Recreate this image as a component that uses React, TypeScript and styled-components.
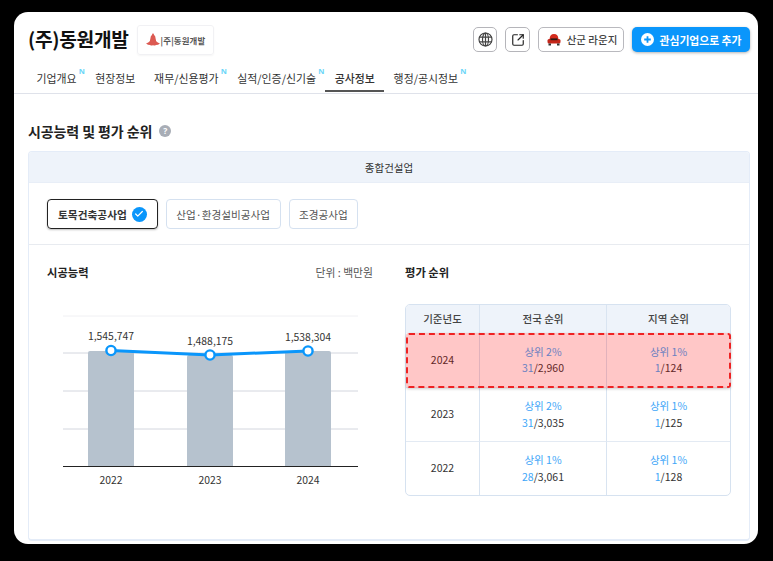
import React from 'react';
import styled, { createGlobalStyle } from 'styled-components';
import { SquareArrowOutUpRight, Check } from 'lucide-react';

const Global = createGlobalStyle`
  html, body { margin: 0; padding: 0; background: #000; }
  body { width: 773px; height: 561px; overflow: hidden; font-family: "Noto Sans CJK KR", "Noto Sans", sans-serif; color: #222; }
  * { box-sizing: border-box; }
`;
const Frame = styled.div`
  width: 773px; height: 561px; background: #000; padding: 12px 15px 17px 14px;
`;
const Screen = styled.div`
  width: 744px; height: 532px; background: #fff; border-radius: 14px; overflow: hidden;
  display: flex; flex-direction: column;
`;
const Header = styled.header`
  height: 82px; border-bottom: 1px solid #dfe2ea; padding: 13px 8px 0 13px; display: flex; flex-direction: column; flex: none;
`;
const TopRow = styled.div`
  display: flex; align-items: center; height: 29px; padding-left: 1px;
`;
const Title = styled.h1`
  margin: 0; font-size: 19.2px; line-height: 29px; font-weight: 700; color: #111; letter-spacing: -0.3px; width: 109px; white-space: nowrap;
`;
const LogoBox = styled.div`
  width: 77px; height: 30px; border: 1px solid #f1f1f4; border-radius: 3px; display: flex; align-items: center; justify-content: center; gap: 1px;
  box-shadow: 0 1px 2px rgba(0,0,0,.04);
`;
const LogoText = styled.span`
  font-size: 8.4px; font-weight: 700; color: #555; white-space: nowrap; letter-spacing: 0.2px;
`;
const Actions = styled.div`
  margin-left: auto; display: flex; gap: 8px; align-items: center;
`;
const IconButton = styled.button<{ $wide?: boolean }>`
  width: ${p => p.$wide ? 25 : 24}px; height: 25px; padding: 0; background: #fff; border: 1px solid #b5b5ba; border-radius: 5px; display: flex; align-items: center; justify-content: center; color: #444;
`;
const LoungeButton = styled.button`
  width: 86px; height: 25px; padding: 0 0 0 2px; background: #fff; border: 1px solid #b9b9be; border-radius: 5px; display: flex; align-items: center; justify-content: center; gap: 6px;
  font: 500 10.5px "Noto Sans CJK KR", sans-serif; color: #444;
`;
const AddButton = styled.button`
  width: 118px; height: 25px; padding: 0; background: #0a96fb; border: 0; border-radius: 5px; display: flex; align-items: center; justify-content: center; gap: 6px;
  font: 700 10.8px "Noto Sans CJK KR", sans-serif; color: #fff; box-shadow: 0 1px 3px rgba(0,0,0,.3);
`;
const Tabs = styled.nav`
  display: flex; margin-top: 9px; height: 30px;
`;
const Tab = styled.div<{ $active?: boolean }>`
  position: relative; padding: 7px 9.4px 0; height: 29px; font-size: 10.9px; line-height: 16px; color: #333; white-space: nowrap; font-weight: ${p => p.$active ? 500 : 400};
  border-bottom: ${p => p.$active ? '2px solid #555' : '2px solid transparent'};
`;
const NewMark = styled.span`
  position: absolute; top: 3px; right: 1px; font: 700 7.5px "Noto Sans", sans-serif; color: #6ad6f8;
`;
const Content = styled.main`
  padding: 27px 8px 0 14px; flex: 1; min-height: 0; display: flex; flex-direction: column;
`;
const SectionHead = styled.div`
  display: flex; align-items: center; gap: 7px; height: 20px; margin-bottom: 10px;
`;
const SectionTitle = styled.h2`
  margin: 0; font-size: 14px; font-weight: 700; color: #222; letter-spacing: -0.1px;
`;
const Help = styled.span`
  width: 12px; height: 12px; border-radius: 50%; background: #a8adb6; color: #fff; font: 700 8.5px/12px "Noto Sans", sans-serif; text-align: center;
`;
const Card = styled.section`
  height: 390px; border: 1px solid #e4ecf8; border-bottom-width: 2px; border-radius: 4px; display: flex; flex-direction: column; overflow: hidden;
`;
const CardHead = styled.div`
  height: 31px; flex: none; background: #eef3fa; font-size: 10.5px; line-height: 31px; text-align: center; color: #333; border-bottom: 1px solid #e8eef7;
`;
const Chips = styled.div`
  height: 62px; flex: none; padding: 16px 18px 0; display: flex; gap: 8px; border-bottom: 1px solid #e8ebf0;
`;
const Chip = styled.div<{ $active?: boolean }>`
  height: 30px; display: flex; align-items: center; gap: 5px; padding: 0 ${p => p.$active ? 10 : 9.5}px; border-radius: 4px; font-size: ${p => p.$active ? 10.7 : 10.6}px; white-space: nowrap;
  border: 1px solid ${p => p.$active ? '#222' : '#d5e1f0'};
  font-weight: ${p => p.$active ? 700 : 400};
  color: ${p => p.$active ? '#333' : '#555'};
  box-shadow: ${p => p.$active ? '0 1px 2px rgba(0,0,0,.25)' : 'none'};
`;
const CheckDot = styled.span`
  width: 15px; height: 15px; border-radius: 50%; background: #0a96fb; color: #fff; display: flex; align-items: center; justify-content: center;
`;
const Panels = styled.div`
  display: grid; grid-template-columns: 326px 326px; column-gap: 32px; padding: 17px 18px 0; flex: 1;
`;
const Panel = styled.div`
  display: flex; flex-direction: column; min-width: 0;
`;
const PanelHead = styled.div`
  display: flex; justify-content: space-between; align-items: center; height: 20px;
`;
const PanelTitle = styled.h3`
  margin: 0; font-size: 11.3px; font-weight: 700; color: #222;
`;
const Unit = styled.span`
  font-size: 10.8px; color: #555;
`;
const Chart = styled.svg`
  display: block; margin-top: 31px; width: 326px; height: 190px;
`;
const TableWrap = styled.div`
  position: relative; margin-top: 22px; width: 326px; border: 1px solid #d6e2f0; border-radius: 5px; overflow: visible;
`;
const Grid = styled.div`
  display: grid; grid-template-columns: 74px 127px 1fr;
`;
const HeadCell = styled.div`
  height: 28px; background: #eef3fa; font-size: 10.5px; line-height: 28px; text-align: center; color: #444; border-right: 1px solid #d9e4f1; font-weight: 500;
  &:first-child { border-top-left-radius: 4px; }
  &:nth-child(3) { border-right: 0; border-top-right-radius: 4px; }
`;
const Cell = styled.div<{ $last?: boolean; $h: number; $end?: boolean }>`
  height: ${p => p.$h}px; display: flex; flex-direction: column; align-items: center; justify-content: center; font-size: 10.5px; line-height: 16.5px; color: #333;
  border-right: ${p => p.$end ? 0 : '1px solid #d9e4f1'};
  border-bottom: ${p => p.$last ? 0 : '1px solid #e3eaf3'};
`;
const Top = styled.span`
  color: #3ea6f8;
`;
const Rank = styled.span`
  color: #3ea6f8;
`;
const Highlight = styled.div`
  position: absolute; left: 0; top: 28px; width: 325px; height: 55px; background: rgba(255, 0, 0, .22); border: 2px dashed #ee2222; border-radius: 3px;
  box-shadow: 0 1px 3px rgba(0,0,0,.2);
`;

const LogoMark = () => (
  <svg width="14" height="13" viewBox="0 0 14 13">
    <path d="M7 0 L8.5 2.5 Q9.5 3 9.5 5 Q9.8 8 11 9 Q13 10 14 10.5 Q12 12 10 12 Q8 13 7 12 Q6 13 4 12 Q2 12 0 10.5 Q1 10 3 9 Q4.2 8 4.5 5 Q4.5 3 5.5 2.5 Z" fill="#dc5a52" />
  </svg>
);
const GlobeIcon = () => (
  <svg width="15" height="15" viewBox="0 0 15 15" fill="none" stroke="#444" strokeWidth="1.2">
    <circle cx="7.5" cy="7.5" r="6.5" />
    <ellipse cx="7.5" cy="7.5" rx="3" ry="6.5" />
    <path d="M7.5 1 V14 M1.2 5.2 H13.8 M1.2 9.8 H13.8" />
  </svg>
);
const Sofa = () => (
  <svg width="14" height="12" viewBox="0 0 14 12">
    <path d="M2.6 5 Q2.8 0 7 0 Q11.2 0 11.4 5 Z" fill="#d42a1c" />
    <rect x="0.5" y="5" width="13" height="4.5" rx="1.5" fill="#c4261a" />
    <rect x="3.5" y="4.4" width="7" height="1.8" fill="#2a1a14" />
    <rect x="1.5" y="9.5" width="2.5" height="2" fill="#333" />
    <rect x="10" y="9.5" width="2.5" height="2" fill="#333" />
  </svg>
);
const PlusCircle = () => (
  <svg width="13" height="13" viewBox="0 0 13 13">
    <circle cx="6.5" cy="6.5" r="6.5" fill="#fff" />
    <path d="M6.5 3.2 V9.8 M3.2 6.5 H9.8" stroke="#0a96fb" strokeWidth="1.8" />
  </svg>
);

const bars = [
  { year: '2022', label: '1,545,747', x: 41, cx: 64, top: 38, py: 37.5, ly: 27 },
  { year: '2023', label: '1,488,175', x: 140, cx: 163, top: 42, py: 42, ly: 32 },
  { year: '2024', label: '1,538,304', x: 238, cx: 261, top: 38, py: 38, ly: 28 },
];

const rows = [
  { year: '2024', h: 55, a: ['상위 2%', '31', '/2,960'], b: ['상위 1%', '1', '/124'] },
  { year: '2023', h: 54, a: ['상위 2%', '31', '/3,035'], b: ['상위 1%', '1', '/125'] },
  { year: '2022', h: 53, a: ['상위 1%', '28', '/3,061'], b: ['상위 1%', '1', '/128'], last: true },
];

const tabs: [string, boolean][] = [
  ['기업개요', true], ['현장정보', false], ['재무/신용평가', true], ['실적/인증/신기술', true], ['공사정보', false], ['행정/공시정보', true],
];

export default function App() {
  return (
    <Frame>
      <Global />
      <Screen>
        <Header>
          <TopRow>
            <Title>(주)동원개발</Title>
            <LogoBox><LogoMark /><LogoText>|주|동원개발</LogoText></LogoBox>
            <Actions>
              <IconButton><GlobeIcon /></IconButton>
              <IconButton $wide><SquareArrowOutUpRight size={14} strokeWidth={2} color="#222" /></IconButton>
              <LoungeButton><Sofa />산군 라운지</LoungeButton>
              <AddButton><PlusCircle />관심기업으로 추가</AddButton>
            </Actions>
          </TopRow>
          <Tabs>
            {tabs.map(([t, n]) => (
              <Tab key={t} $active={t === '공사정보'}>{t}{n && <NewMark>N</NewMark>}</Tab>
            ))}
          </Tabs>
        </Header>
        <Content>
          <SectionHead><SectionTitle>시공능력 및 평가 순위</SectionTitle><Help>?</Help></SectionHead>
          <Card>
            <CardHead>종합건설업</CardHead>
            <Chips>
              <Chip $active>토목건축공사업<CheckDot><Check size={10} strokeWidth={3} /></CheckDot></Chip>
              <Chip>산업·환경설비공사업</Chip>
              <Chip>조경공사업</Chip>
            </Chips>
            <Panels>
              <Panel>
                <PanelHead><PanelTitle>시공능력</PanelTitle><Unit>단위 : 백만원</Unit></PanelHead>
                <Chart viewBox="0 0 326 190">
                  {[3, 40, 78, 116].map(y => (
                    <line key={y} x1="16" x2="311" y1={y} y2={y} stroke={y === 3 ? '#f0f0f3' : '#d3d6de'} strokeWidth="1" />
                  ))}
                  {bars.map(b => (
                    <path key={b.year} d={`M${b.x} 153 V${b.top + 2} q0 -2 2 -2 H${b.x + 44} q2 0 2 2 V153 Z`} fill="#b6c2ce" />
                  ))}
                  <line x1="16" x2="311" y1="153.5" y2="153.5" stroke="#222" strokeWidth="1.2" />
                  <polyline points={bars.map(b => `${b.cx},${b.py}`).join(' ')} fill="none" stroke="#0a96fb" strokeWidth="3" />
                  {bars.map(b => (
                    <g key={b.year}>
                      <circle cx={b.cx} cy={b.py} r="4.6" fill="#fff" stroke="#0a96fb" strokeWidth="2.4" />
                      <text x={b.cx} y={b.ly} textAnchor="middle" fontSize="10.4" fill="#333" fontFamily="Noto Sans CJK KR, sans-serif">{b.label}</text>
                      <text x={b.cx} y="171" textAnchor="middle" fontSize="10.4" fill="#333" fontFamily="Noto Sans CJK KR, sans-serif">{b.year}</text>
                    </g>
                  ))}
                </Chart>
              </Panel>
              <Panel>
                <PanelHead><PanelTitle>평가 순위</PanelTitle></PanelHead>
                <TableWrap>
                  <Grid>
                    <HeadCell>기준년도</HeadCell>
                    <HeadCell>전국 순위</HeadCell>
                    <HeadCell>지역 순위</HeadCell>
                    {rows.map(r => (
                      <React.Fragment key={r.year}>
                        <Cell $h={r.h} $last={r.last}>{r.year}</Cell>
                        <Cell $h={r.h} $last={r.last}>
                          <Top>{r.a[0]}</Top>
                          <span><Rank>{r.a[1]}</Rank>{r.a[2]}</span>
                        </Cell>
                        <Cell $h={r.h} $last={r.last} $end>
                          <Top>{r.b[0]}</Top>
                          <span><Rank>{r.b[1]}</Rank>{r.b[2]}</span>
                        </Cell>
                      </React.Fragment>
                    ))}
                  </Grid>
                  <Highlight />
                </TableWrap>
              </Panel>
            </Panels>
          </Card>
        </Content>
      </Screen>
    </Frame>
  );
}
